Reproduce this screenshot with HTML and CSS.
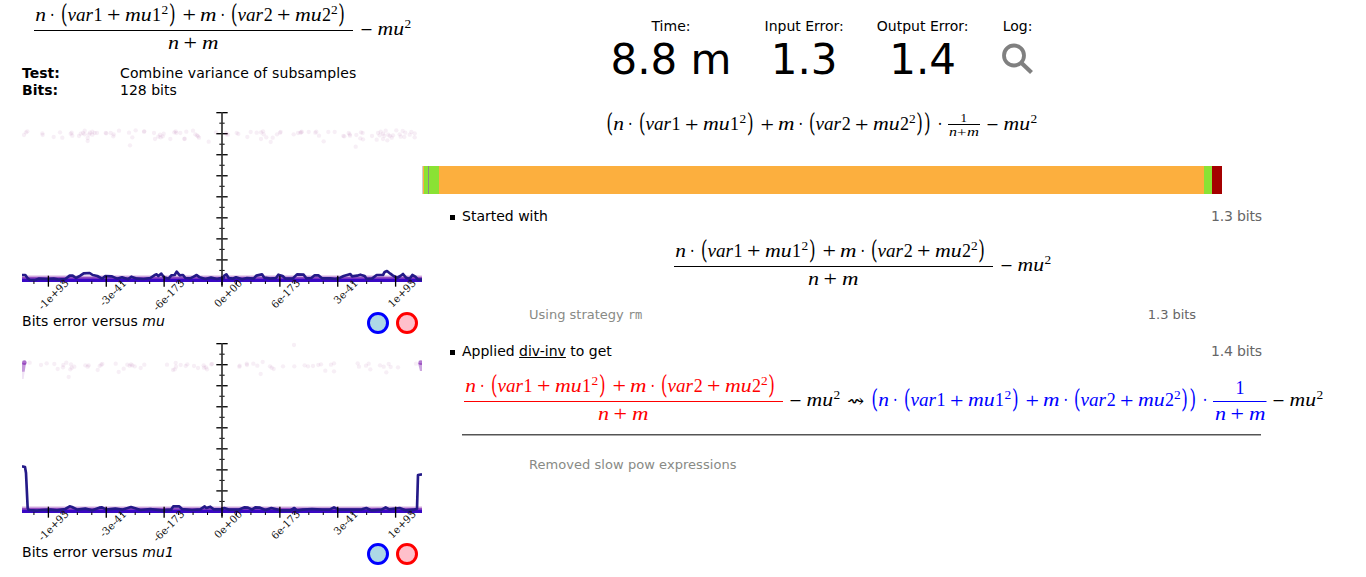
FILE: index.html
```html
<!DOCTYPE html>
<html lang="en">
<head>
<meta charset="utf-8">
<title>Combine variance of subsamples</title>
<link rel="stylesheet" href="styles.css">
</head>
<body>
<div class="page">
  <section class="about">
    <div class="formula" data-formula="input"></div>
    <dl class="facts">
      <dt>Test:</dt><dd>Combine variance of subsamples</dd>
      <dt>Bits:</dt><dd>128 bits</dd>
    </dl>
    <figure class="graph">
      <div class="plot" data-plot="mu"></div>
      <figcaption><span>Bits error versus <var>mu</var></span><i class="toggle blue"></i><i class="toggle red"></i></figcaption>
    </figure>
    <figure class="graph">
      <div class="plot" data-plot="mu1"></div>
      <figcaption><span>Bits error versus <var>mu1</var></span><i class="toggle blue"></i><i class="toggle red"></i></figcaption>
    </figure>
  </section>
  <main class="report">
    <div class="summary">
      <div class="stat"><span>Time:</span><b>8.8 m</b></div>
      <div class="stat"><span>Input Error:</span><b>1.3</b></div>
      <div class="stat"><span>Output Error:</span><b>1.4</b></div>
      <div class="stat"><span>Log:</span>
        <svg class="magnifier" width="32" height="32" viewBox="0 0 32 32"><circle cx="12" cy="12.5" r="10" fill="none" stroke="#808080" stroke-width="3.8"/><path d="M19 19.5L29.5 29.5" stroke="#808080" stroke-width="4.2"/></svg>
      </div>
    </div>
    <div class="formula output" data-formula="output"></div>
    <div class="timeline"><i class="t0"></i><i class="t1"></i><i class="t2"></i><i class="t3"></i><i class="t4"></i><i class="t5"></i><i class="t6"></i><i class="t7"></i></div>
    <ol class="history">
      <li class="step"><i class="bullet"></i><span>Started with</span><span class="bits">1.3 bits</span></li>
      <li class="formula centered" data-formula="input"></li>
      <li class="note"><span>Using strategy <code>rm</code></span><span class="bits">1.3 bits</span></li>
      <li class="step applied"><i class="bullet"></i><span>Applied <u>div-inv</u> to get</span><span class="bits">1.4 bits</span></li>
      <li class="formula change" data-formula="change"></li>
      <li class="rule"></li>
      <li class="note removed"><span>Removed slow pow expressions</span></li>
    </ol>
  </main>
</div>
<script src="script.js"></script>
</body>
</html>
```
FILE: styles.css
```css
* { box-sizing: border-box; }
body { margin: 0; height: 577px; overflow: hidden; background: #fff; color: #000; font: 14px/17px "DejaVu Sans", sans-serif; }
.page { display: grid; grid-template-columns: 400px 800px; padding-left: 22px; height: 577px; overflow: hidden; }
.formula svg { display: block; overflow: visible; fill: currentColor; font-family: "Liberation Serif", serif; }
.formula .it { font-style: italic; font-size: 18.5px; }
.formula .num { font-size: 18.5px; }
.formula .sup { font-size: 13.5px; }
.formula .op { font-size: 22px; }
.formula .paren { font-family: "DejaVu Math TeX Gyre", "Liberation Serif", serif; font-size: 26px; }
.formula .arrow { font-family: "DejaVu Math TeX Gyre", "DejaVu Sans", sans-serif; font-size: 17px; }
.formula .sit { font-style: italic; font-size: 13.5px; }
.formula .was { fill: #f00; }
.formula .now { fill: #00f; }

.about { min-width: 0; }
.about > .formula { padding-left: 12px; height: 65px; }
.facts { display: grid; grid-template-columns: 98px 1fr; align-content: start; margin: 0; height: 47px; }
.facts dt { font-weight: bold; height: 17px; }
.facts dd { margin: 0; height: 17px; }
.facts dd:first-of-type { letter-spacing: .13px; }
.graph { margin: 0; height: 231px; }
.plot { height: 200px; }
.plot svg { display: block; font-family: "DejaVu Serif", serif; font-size: 31px; overflow: visible; }
figcaption { display: flex; align-items: flex-start; gap: 7px; height: 31px; padding-right: 4px; letter-spacing: .04px; }
figcaption span { flex: 1; padding-top: 1px; }
.toggle { width: 22px; height: 22px; border: 3px solid; border-radius: 50%; }
.blue { border-color: #00f; background: #add8e6; }
.red { border-color: #f00; background: #ffc0cb; }

.summary { display: flex; justify-content: center; gap: 33px; height: 110px; padding-top: 18px; }
.stat { display: flex; flex-direction: column; align-items: center; }
.stat b { font-size: 42px; line-height: 49px; font-weight: normal; }
.magnifier { margin-top: 8px; }
.output { height: 56px; padding-left: 184px; }
.timeline { display: flex; height: 28px; }
.timeline i { height: 28px; }
.t0 { width: 1px; background: #ccc; }
.t1 { width: 1px; background: #fcaf3e; }
.t2 { width: 4px; background: #8ae234; }
.t3 { width: 1px; background: #888a85; }
.t4 { width: 10px; background: #8ae234; }
.t5 { flex: 1; background: #fcaf3e; }
.t6 { width: 8px; background: #8ae234; }
.t7 { width: 10px; background: #a40000; }
.history { list-style: none; margin: 0 0 0 28px; padding: 14px 0 0; width: 812px; }
.step { display: flex; align-items: center; height: 17px; }
.bullet { width: 5px; height: 5px; margin: 2px 7px 0 0; background: #000; }
.bits { margin-left: auto; color: #666; letter-spacing: -.15px; }
.centered { height: 80px; padding: 11px 0 0 224px; }
.note { display: flex; height: 17px; margin: 1px 66px 0 79px; font-size: 13px; color: #888a85; }
.note .bits { letter-spacing: -.05px; }
.note code { font: 12px "DejaVu Sans Mono", monospace; }
.applied { margin-top: 20px; }
.change { height: 74px; padding: 11px 0 0 14px; }
.rule { height: 2px; margin-left: 12px; width: 799px; border-top: 1px solid #555; border-bottom: 1px solid #aaa; }
.removed { margin-top: 20px; letter-spacing: .05px; }
```
FILE: script.js
```js
// Math layout: every token has a pen position, a baseline and a width.
const tok = (x, y, w, cls, s) => `<text class="${cls}" x="${x}" y="${y}" textLength="${w}" lengthAdjust="spacingAndGlyphs">${s}</text>`;
const plus = (x, y) => tok(x - 0.5, y + 1.2, 13.5, 'op', '+');
const minus = (x, y) => tok(x - 0.5, y + 1.5, 12, 'op', '−');
const paren = (x, y, s) => tok(x - 0.8, y + 0.8, 7, 'paren', s);
const dot = (x, y) => tok(x - 2.5, y, 5, 'num', '·');
const bar = (x, y, w) => `<rect x="${x}" y="${y}" width="${w}" height="1"/>`;

// n·(var1 + mu1²) + m·(var2 + mu2²)
const sum = (x, y) =>
  tok(x + 1.3, y, 10.7, 'it', 'n') + dot(x + 18.3, y) + paren(x + 27, y, '(') +
  tok(x + 33.5, y, 25.5, 'it', 'var') + tok(x + 59.5, y, 9, 'num', '1') + plus(x + 73.5, y) +
  tok(x + 91, y, 26.7, 'it', 'mu') + tok(x + 118, y, 9, 'num', '1') + tok(x + 127.5, y - 7, 6.7, 'sup', '2') +
  paren(x + 136, y, ')') + plus(x + 149, y) + tok(x + 166, y, 16.5, 'it', 'm') + dot(x + 188.7, y) +
  paren(x + 197, y, '(') + tok(x + 203.5, y, 25.5, 'it', 'var') + tok(x + 229.8, y, 9, 'num', '2') + plus(x + 243.5, y) +
  tok(x + 261, y, 26.7, 'it', 'mu') + tok(x + 288, y, 9, 'num', '2') + tok(x + 297, y - 7, 6.7, 'sup', '2') +
  paren(x + 305.3, y, ')');
const muSquared = (x, y) => minus(x, y) + tok(x + 16.5, y, 26.5, 'it', 'mu') + tok(x + 43.5, y - 7, 6.7, 'sup', '2');
const nPlusM = (x, y) => tok(x, y, 11, 'it', 'n') + plus(x + 16, y) + tok(x + 34, y, 16.5, 'it', 'm');
const fraction = (x) => sum(x, 20.7) + bar(x, 30, 319) + nPlusM(x + 134, 48.6);
const svg = (w, h, body) => `<svg width="${w}" height="${h}">${body}</svg>`;

const formulas = {
  input: () => svg(378, 58, fraction(0) + muSquared(327, 35.4)),
  output: () => svg(434, 40, paren(0.6, 20.4, '(') + sum(6, 20.4) + paren(319, 20.4, ')') + dot(334, 20.4) +
    tok(354.5, 12, 6.5, 'sup', '1') + bar(342, 14, 32) +
    tok(343, 26, 8, 'sit', 'n') + tok(351, 26.5, 9.5, 'sup', '+') + tok(361, 26, 12, 'sit', 'm') +
    muSquared(381, 20.4)),
  change: () => svg(862, 58, `<g class="was">${fraction(0)}</g>` + muSquared(326, 35.4) +
    tok(383, 34.7, 18, 'arrow', '⇝') +
    `<g class="now">${paren(407.6, 35.4, '(') + sum(413, 35.4) + paren(726.5, 35.4, ')') + dot(741, 35.4) +
      tok(771.5, 22.6, 9, 'num', '1') + bar(749, 30, 53.5) + nPlusM(751, 48.6)}</g>` +
    muSquared(809, 35.4))
};
document.querySelectorAll('[data-formula]').forEach(e => { e.innerHTML = formulas[e.dataset.formula](); });

// Plot data, in thirds of a pixel; the halves meet at the vertical axis.
const plots = {
  mu: {
    left: [[72,90],[78,82],[82,79],[127,85],[128,90],[161,96],[180,82],[187,98],[212,86],[215,83],[217,92],[237,93],[242,86],[249,84],[254,77],[254,88],[263,99],[263,108],[267,88],[270,83],[277,80],[277,89],[284,84],[291,84],[317,84],[319,85],[332,84],[340,94],[341,88],[357,77],[387,83],[390,121],[397,97],[407,76],[432,80],[433,79],[462,84],[465,102],[475,95],[480,89],[482,97],[488,94],[491,86],[511,102],[523,82],[527,79],[529,84],[541,84],[553,102],[554,101],[559,80],[579,77],[586,88],[591,91],[594,94],[597,98],[626,110],[648,82]],
    right: [[32,83],[35,88],[39,89],[65,84],[70,87],[97,96],[107,81],[125,83],[138,82],[138,102],[144,79],[146,88],[154,97],[167,111],[173,98],[186,88],[195,83],[197,81],[236,88],[249,84],[256,83],[259,82],[260,80],[281,81],[301,83],[304,80],[312,92],[326,109],[340,81],[359,81],[385,93],[388,94],[401,84],[404,88],[405,92],[422,125],[424,90],[436,100],[438,82],[443,84],[444,103],[471,93],[485,104],[489,84],[494,91],[497,80],[504,86],[504,102],[508,92],[512,77],[517,106],[520,89],[524,93],[530,98],[534,91],[544,76],[554,88],[557,95],[563,78],[568,96],[571,83],[584,89],[589,81],[599,85],[599,97]],
    line: "0,489 10,489 18,500 24,504 40,504 50,500 75,501 95,500 110,503 130,501 143,491 152,491 162,498 175,491 185,484 203,483 212,489 226,492 240,500 250,492 270,493 285,500 300,496 318,502 328,494 345,500 365,501 385,498 397,490 404,487 409,492 418,485 426,496 440,500 448,490 458,489 464,479 473,490 483,489 490,498 505,499 515,494 524,489 533,496 550,501 567,497 585,501 598,498 604,500 607,491 613,487 620,498 632,500 642,496 660,502 675,498 695,500 703,491 720,487 727,497 745,500 762,498 769,488 782,492 790,500 812,500 825,487 845,488 853,499 868,498 878,490 889,490 900,499 925,499 940,501 955,497 965,492 978,488 985,486 990,493 1005,491 1015,488 1028,492 1034,501 1050,500 1064,489 1083,489 1088,480 1095,477 1105,485 1112,490 1125,498 1135,492 1143,486 1152,497 1163,500 1171,489 1180,494 1188,503 1200,503"
  },
  mu1: {
    left: [[89,83],[123,90],[140,85],[163,87],[173,102],[189,97],[190,90],[199,83],[206,126],[211,103],[213,88],[215,98],[223,95],[256,91],[263,95],[266,91],[293,105],[299,93],[304,89],[307,87],[347,86],[356,111],[371,101],[382,89],[389,92],[393,88],[397,91],[404,94],[422,99],[433,89],[501,89],[519,105],[524,103],[527,84],[528,95],[542,90],[557,93],[562,88],[582,93],[594,99],[611,91],[612,98],[618,97],[621,103],[634,88],[636,87]],
    right: [[73,95],[74,92],[95,86],[96,90],[115,86],[127,92],[137,117],[143,81],[165,94],[170,98],[176,102],[204,94],[237,30],[238,94],[269,91],[279,94],[294,93],[310,90],[318,88],[331,107],[348,89],[357,85],[357,109],[428,85],[432,95],[453,92],[461,86],[466,103],[495,91],[506,95],[514,112],[521,87],[527,96],[549,97],[603,86]],
    line: "0,370 9,372 12,390 17,495 20,501 45,503 60,501 85,500 105,502 130,498 143,490 150,492 166,500 190,497 211,502 232,494 240,493 253,500 280,497 300,500 327,492 337,495 355,501 385,498 420,502 447,500 454,490 472,490 480,498 510,501 535,499 548,490 553,495 565,491 575,499 600,499 607,495 622,500 650,500 668,493 678,494 690,500 700,493 714,494 730,501 748,495 775,502 805,502 817,495 825,503 842,500 870,498 900,500 923,500 936,493 950,500 990,500 1020,499 1033,495 1048,502 1079,500 1091,493 1102,499 1133,495 1150,502 1175,500 1185,497 1188,396 1200,394"
  }
};

const labels = ['-1e+93', '-3e-41', '-6e-173', '0e+00', '6e-173', '3e-41', '1e+93'];
const drawPlot = (name) => {
  const d = plots[name], top = name === 'mu' ? 21 : 24;
  const dots = [...d.left.map(p => [p[0] - 66, p[1] - top]), ...d.right.map(p => [p[0] + 579, p[1] - top])];
  let s = `<defs><clipPath id="c-${name}"><rect x="0" y="-5" width="1200" height="620"/></clipPath></defs>`;
  for (let i = 0; i <= 16; i++) {
    const y = 2 + i * 31.55, r = i % 2 ? 8 : 17;
    s += `<path d="M${600 - r} ${y}H${600 + r}" stroke="#000" stroke-width="${i % 2 ? 3 : 4}"/>`;
  }
  s += '<path d="M600 0V520" stroke="#333" stroke-width="5"/>';
  s += `<g clip-path="url(#c-${name})"><g fill="#80107f" fill-opacity=".065">` + dots.map(p => `<circle cx="${p[0]}" cy="${p[1]}" r="6.5"/>`).join('') + '</g>';
  s += '<rect x="0" y="489" width="1200" height="6" fill="#b060c0" opacity=".25"/><rect x="0" y="494" width="1200" height="8" fill="#7820b0" opacity=".8"/><rect x="0" y="500" width="1200" height="10" fill="#3908c4"/>';
  if (name === 'mu1') {
    s += '<g fill="#8020b0"><circle cx="7" cy="59" r="7" opacity=".65"/><path d="M0 60H12L8 86H0Z" opacity=".45"/><path d="M0 86H8L5 108H0Z" opacity=".12"/><circle cx="1196" cy="59" r="7" opacity=".6"/><path d="M1188 60H1200V84H1194Z" opacity=".4"/></g>';
  }
  s += `<polyline points="${d.line}" fill="none" stroke="#241a88" stroke-width="8" stroke-linejoin="round"/></g>`;
  for (let i = -13; i <= 13; i++) {
    const x = 600 + i * 43.4, major = i % 4 === 0;
    s += `<path d="M${x} ${major ? 491 : 508}V${major ? 524 : 516}" stroke="#000" stroke-width="${major ? 4 : 3}"/>`;
  }
  labels.forEach((t, i) => {
    s += `<text transform="translate(${79.2 + i * 173.6 + 63} 515) rotate(-45)" text-anchor="end" fill="#111">${t}</text>`;
  });
  return `<svg width="400" height="200" viewBox="0 0 1200 600">${s}</svg>`;
};
document.querySelectorAll('[data-plot]').forEach(e => { e.innerHTML = drawPlot(e.dataset.plot); });
```
